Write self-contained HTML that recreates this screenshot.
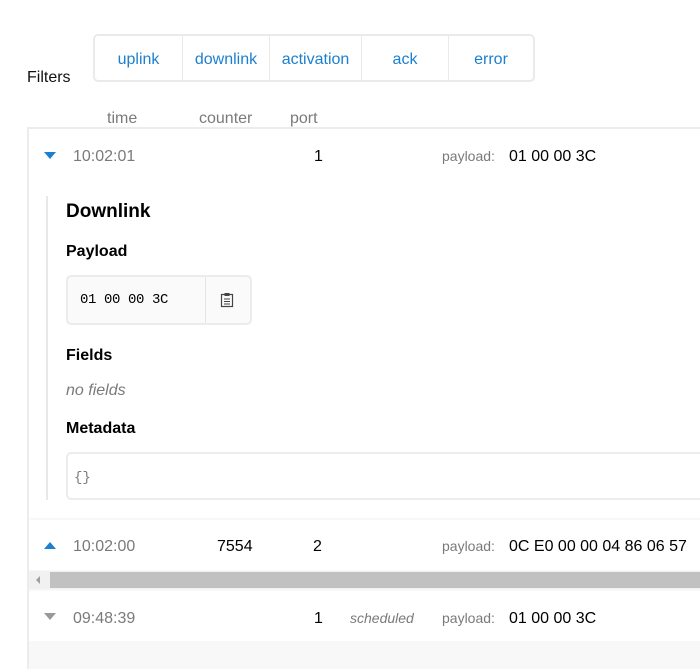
<!DOCTYPE html>
<html><head><style>
body{margin:0;width:700px;height:659px;overflow:hidden;background:#fff;font-family:"Liberation Sans",sans-serif;position:relative}
.a{position:absolute;white-space:nowrap}
.blue{color:#1d7fd0}
.gray{color:#7a7a7a}
</style></head><body>
<div class="a" style="left:27px;top:69px;font-size:16px;color:#111">Filters</div>
<div class="a" style="left:93px;top:34px;width:442px;height:48px;border:2px solid #eaeaea;border-radius:5px;box-sizing:border-box;display:flex;font-size:16px">
<div style="width:87px;border-right:1px solid #eaeaea;text-align:center;line-height:48px" class="blue">uplink</div>
<div style="width:86px;border-right:1px solid #eaeaea;text-align:center;line-height:48px" class="blue">downlink</div>
<div style="width:91px;border-right:1px solid #eaeaea;text-align:center;line-height:48px" class="blue">activation</div>
<div style="width:86px;border-right:1px solid #eaeaea;text-align:center;line-height:48px" class="blue">ack</div>
<div style="flex:1;text-align:center;line-height:48px" class="blue">error</div>
</div>
<div class="a gray" style="left:107px;top:110px;font-size:16px">time</div>
<div class="a gray" style="left:199px;top:110px;font-size:16px">counter</div>
<div class="a gray" style="left:290px;top:110px;font-size:16px">port</div>
<div class="a" style="left:27px;top:127px;width:700px;height:540px;border-left:2px solid #ececec;border-top:2px solid #ececec;background:#f8f8f8"></div>
<div class="a" style="left:29px;top:129px;width:680px;height:389px;background:#fff"></div>
<div class="a" style="left:44px;top:152px;width:0;height:0;border-left:6px solid transparent;border-right:6px solid transparent;border-top:7px solid #1d7fd0"></div>
<div class="a gray" style="left:73px;top:148px;font-size:16px">10:02:01</div>
<div class="a" style="left:314px;top:148px;font-size:16px">1</div>
<div class="a gray" style="left:442px;top:148px;font-size:14px">payload:</div>
<div class="a" style="left:509px;top:148px;font-size:16px">01 00 00 3C</div>
<div class="a" style="left:46px;top:196px;width:2px;height:304px;background:#e8e8e8"></div>
<div class="a" style="left:66px;top:201px;font-size:19px;font-weight:bold">Downlink</div>
<div class="a" style="left:66px;top:243px;font-size:16px;font-weight:bold">Payload</div>
<div class="a" style="left:66px;top:275px;width:186px;height:50px;border:2px solid #ececec;border-radius:5px;box-sizing:border-box;background:#fafafa"></div>
<div class="a" style="left:205px;top:277px;width:1px;height:46px;background:#e6e6e6"></div>
<div class="a" style="left:80px;top:292px;font-family:'Liberation Mono',monospace;font-size:14px;letter-spacing:-0.4px">01 00 00 3C</div>
<svg class="a" style="left:220px;top:292px" width="14" height="16" viewBox="0 0 14 16"><rect x="1.5" y="2.5" width="11" height="12" fill="none" stroke="#444" stroke-width="1.2"/><rect x="4.5" y="1" width="5" height="3" fill="#444"/><path d="M4 7h6M4 9.5h6M4 12h6" stroke="#444" stroke-width="1"/></svg>
<div class="a" style="left:66px;top:347px;font-size:16px;font-weight:bold">Fields</div>
<div class="a gray" style="left:66px;top:382px;font-size:16px;font-style:italic">no fields</div>
<div class="a" style="left:66px;top:420px;font-size:16px;font-weight:bold">Metadata</div>
<div class="a" style="left:66px;top:452px;width:660px;height:48px;border:2px solid #ececec;border-radius:5px;box-sizing:border-box"></div>
<div class="a gray" style="left:74px;top:470px;font-family:'Liberation Mono',monospace;font-size:14px">{}</div>
<div class="a" style="left:29px;top:520px;width:680px;height:50px;background:#fff"></div>
<div class="a" style="left:44px;top:542px;width:0;height:0;border-left:6px solid transparent;border-right:6px solid transparent;border-bottom:7px solid #1d7fd0"></div>
<div class="a gray" style="left:73px;top:538px;font-size:16px">10:02:00</div>
<div class="a" style="left:217px;top:538px;font-size:16px">7554</div>
<div class="a" style="left:313px;top:538px;font-size:16px">2</div>
<div class="a gray" style="left:442px;top:538px;font-size:14px">payload:</div>
<div class="a" style="left:509px;top:538px;font-size:16px">0C E0 00 00 04 86 06 57</div>
<div class="a" style="left:29px;top:571px;width:680px;height:18px;background:#f1f1f1"></div>
<div class="a" style="left:50px;top:572px;width:660px;height:16px;background:#c1c1c1"></div>
<div class="a" style="left:36px;top:576px;width:0;height:0;border-top:4px solid transparent;border-bottom:4px solid transparent;border-right:4px solid #a0a0a0"></div>
<div class="a" style="left:29px;top:591px;width:680px;height:50px;background:#fff"></div>
<div class="a" style="left:44px;top:613px;width:0;height:0;border-left:6px solid transparent;border-right:6px solid transparent;border-top:7px solid #999"></div>
<div class="a gray" style="left:73px;top:610px;font-size:16px">09:48:39</div>
<div class="a" style="left:314px;top:610px;font-size:16px">1</div>
<div class="a gray" style="left:350px;top:610px;font-size:14px;font-style:italic">scheduled</div>
<div class="a gray" style="left:442px;top:610px;font-size:14px">payload:</div>
<div class="a" style="left:509px;top:610px;font-size:16px">01 00 00 3C</div>
</body></html>
